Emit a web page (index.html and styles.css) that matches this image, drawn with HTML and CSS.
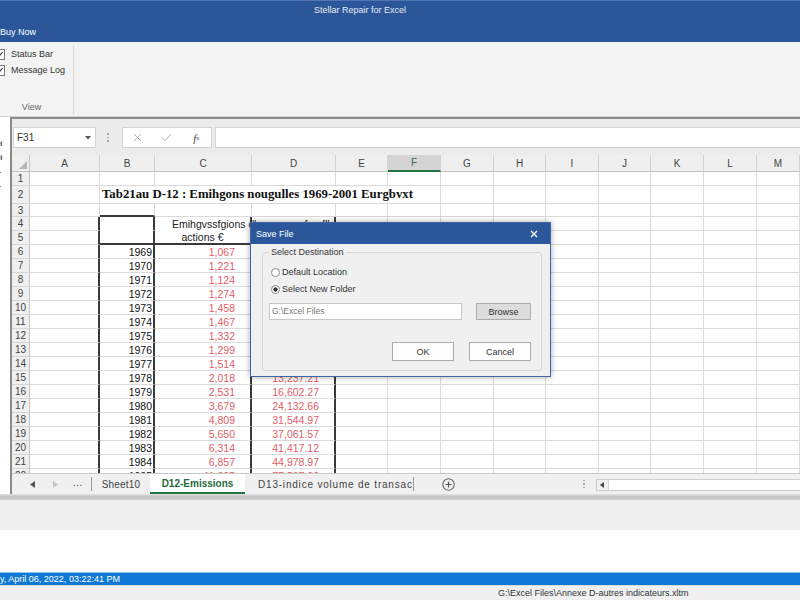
FILE: index.html
```html
<!DOCTYPE html>
<html>
<head>
<meta charset="utf-8">
<title>Stellar Repair for Excel</title>
<link rel="stylesheet" href="styles.css">
</head>
<body>
<div class="app">
  <header class="titlebar">
    <div class="title">Stellar Repair for Excel</div>
    <div class="menu">Buy Now</div>
  </header>

  <section class="ribbon">
    <div class="group">
      <div class="checks">
        <div class="chk"><span class="box"><svg width="9" height="9" viewBox="0 0 9 9"><path d="M1.5 4.5 L3.6 6.8 L7.6 2" fill="none" stroke="#333" stroke-width="1.1"/></svg></span>Status Bar</div>
        <div class="chk"><span class="box"><svg width="9" height="9" viewBox="0 0 9 9"><path d="M1.5 4.5 L3.6 6.8 L7.6 2" fill="none" stroke="#333" stroke-width="1.1"/></svg></span>Message Log</div>
      </div>
      <div class="group-label">View</div>
    </div>
  </section>

  <main class="workarea">
    <aside class="tree">
      <span>ei</span><span>ei</span><span>l-</span><span>l-</span>
    </aside>
    <div class="excel">
      <div class="fbar">
        <div class="namebox"><span>F31</span><svg width="6" height="4" viewBox="0 0 6 4"><path d="M0 0 L6 0 L3 3.5 Z" fill="#555"/></svg></div>
        <div class="vdots"><i></i><i></i><i></i></div>
        <div class="fxbox">
          <span class="fxi"><svg width="9" height="9" viewBox="0 0 9 9"><path d="M1 1 L8 8 M8 1 L1 8" stroke="#b0b0b0" stroke-width="1"/></svg></span>
          <span class="fxi"><svg width="11" height="9" viewBox="0 0 11 9"><path d="M1 4.5 L4 7.8 L10 1" fill="none" stroke="#b0b0b0" stroke-width="1"/></svg></span>
          <span class="fxi fx">f<sub>x</sub></span>
        </div>
        <div class="formula"></div>
      </div>

      <div class="sheet">
        <div class="row hdr">
          <div class="corner"><svg width="8" height="8" viewBox="0 0 8 8"><path d="M8 0 L8 8 L0 8 Z" fill="#b8b8b8"/></svg></div>
          <div>A</div><div>B</div><div>C</div><div>D</div><div>E</div><div class="sel">F</div><div>G</div><div>H</div><div>I</div><div>J</div><div>K</div><div>L</div><div>M</div>
        </div>
        <div class="row"><div class="rh">1</div><div></div><div></div><div></div><div></div><div></div><div></div><div></div><div></div><div></div><div></div><div></div><div></div><div></div></div>
        <div class="row r2"><div class="rh">2</div><div></div><div class="ttl">Tab21au D-12 : Emihgons nougulles 1969-2001 Eurgbvxt</div><div></div><div></div><div></div><div></div><div></div><div></div><div></div></div>
        <div class="row r3"><div class="rh">3</div><div></div><div class="db"></div><div></div><div></div><div></div><div></div><div></div><div></div><div></div><div></div><div></div><div></div><div></div></div>
        <div class="row"><div class="rh">4</div><div class="dr"></div><div class="dr nb"></div><div class="dr nb hc">Emihgvssfgions d'</div><div class="dr nb hd">en fmafll</div><div></div><div></div><div></div><div></div><div></div><div></div><div></div><div></div><div></div></div>
        <div class="row"><div class="rh">5</div><div class="dr"></div><div class="dr db"></div><div class="dr db ctr">actions €</div><div class="dr db"></div><div></div><div></div><div></div><div></div><div></div><div></div><div></div><div></div><div></div></div>
        <div class="row"><div class="rh">6</div><div class="dr"></div><div class="dr yr">1969</div><div class="dr red">1,067</div><div class="dr"></div><div></div><div></div><div></div><div></div><div></div><div></div><div></div><div></div><div></div></div>
        <div class="row"><div class="rh">7</div><div class="dr"></div><div class="dr yr">1970</div><div class="dr red">1,221</div><div class="dr"></div><div></div><div></div><div></div><div></div><div></div><div></div><div></div><div></div><div></div></div>
        <div class="row"><div class="rh">8</div><div class="dr"></div><div class="dr yr">1971</div><div class="dr red">1,124</div><div class="dr"></div><div></div><div></div><div></div><div></div><div></div><div></div><div></div><div></div><div></div></div>
        <div class="row"><div class="rh">9</div><div class="dr"></div><div class="dr yr">1972</div><div class="dr red">1,274</div><div class="dr"></div><div></div><div></div><div></div><div></div><div></div><div></div><div></div><div></div><div></div></div>
        <div class="row"><div class="rh">10</div><div class="dr"></div><div class="dr yr">1973</div><div class="dr red">1,458</div><div class="dr"></div><div></div><div></div><div></div><div></div><div></div><div></div><div></div><div></div><div></div></div>
        <div class="row"><div class="rh">11</div><div class="dr"></div><div class="dr yr">1974</div><div class="dr red">1,467</div><div class="dr"></div><div></div><div></div><div></div><div></div><div></div><div></div><div></div><div></div><div></div></div>
        <div class="row"><div class="rh">12</div><div class="dr"></div><div class="dr yr">1975</div><div class="dr red">1,332</div><div class="dr"></div><div></div><div></div><div></div><div></div><div></div><div></div><div></div><div></div><div></div></div>
        <div class="row"><div class="rh">13</div><div class="dr"></div><div class="dr yr">1976</div><div class="dr red">1,299</div><div class="dr"></div><div></div><div></div><div></div><div></div><div></div><div></div><div></div><div></div><div></div></div>
        <div class="row"><div class="rh">14</div><div class="dr"></div><div class="dr yr">1977</div><div class="dr red">1,514</div><div class="dr"></div><div></div><div></div><div></div><div></div><div></div><div></div><div></div><div></div><div></div></div>
        <div class="row"><div class="rh">15</div><div class="dr"></div><div class="dr yr">1978</div><div class="dr red">2,018</div><div class="dr redd">13,237.21</div><div></div><div></div><div></div><div></div><div></div><div></div><div></div><div></div><div></div></div>
        <div class="row"><div class="rh">16</div><div class="dr"></div><div class="dr yr">1979</div><div class="dr red">2,531</div><div class="dr redd">16,602.27</div><div></div><div></div><div></div><div></div><div></div><div></div><div></div><div></div><div></div></div>
        <div class="row"><div class="rh">17</div><div class="dr"></div><div class="dr yr">1980</div><div class="dr red">3,679</div><div class="dr redd">24,132.66</div><div></div><div></div><div></div><div></div><div></div><div></div><div></div><div></div><div></div></div>
        <div class="row"><div class="rh">18</div><div class="dr"></div><div class="dr yr">1981</div><div class="dr red">4,809</div><div class="dr redd">31,544.97</div><div></div><div></div><div></div><div></div><div></div><div></div><div></div><div></div><div></div></div>
        <div class="row"><div class="rh">19</div><div class="dr"></div><div class="dr yr">1982</div><div class="dr red">5,650</div><div class="dr redd">37,061.57</div><div></div><div></div><div></div><div></div><div></div><div></div><div></div><div></div><div></div></div>
        <div class="row"><div class="rh">20</div><div class="dr"></div><div class="dr yr">1983</div><div class="dr red">6,314</div><div class="dr redd">41,417.12</div><div></div><div></div><div></div><div></div><div></div><div></div><div></div><div></div><div></div></div>
        <div class="row"><div class="rh">21</div><div class="dr"></div><div class="dr yr">1984</div><div class="dr red">6,857</div><div class="dr redd">44,978.97</div><div></div><div></div><div></div><div></div><div></div><div></div><div></div><div></div><div></div></div>
        <div class="row"><div class="rh">22</div><div class="dr"></div><div class="dr yr">1985</div><div class="dr red">11,825</div><div class="dr redd">77,567.00</div><div></div><div></div><div></div><div></div><div></div><div></div><div></div><div></div><div></div></div>
      </div>

      <div class="tabs">
        <div class="nav">
          <span class="nv"><svg width="5" height="7" viewBox="0 0 5 7"><path d="M5 0 L5 7 L0 3.5 Z" fill="#555"/></svg></span>
          <span class="nv nv2"><svg width="5" height="7" viewBox="0 0 5 7"><path d="M0 0 L0 7 L5 3.5 Z" fill="#c4c4c4"/></svg></span>
          <span class="more">...</span>
          <span class="vsep"></span>
        </div>
        <div class="tab t1">Sheet10</div>
        <div class="tab active">D12-Emissions</div>
        <div class="tab t3">D13-indice volume de transactions</div>
        <span class="vsep"></span>
        <span class="add"><svg width="13" height="13" viewBox="0 0 13 13"><circle cx="6.5" cy="6.5" r="5.7" fill="none" stroke="#666" stroke-width="1.1"/><path d="M6.5 3.5 V9.5 M3.5 6.5 H9.5" stroke="#555" stroke-width="1.2"/></svg></span>
        <span class="hdots"><i></i><i></i><i></i></span>
        <div class="hscroll"><span class="sbtn"><svg width="4" height="6" viewBox="0 0 4 6"><path d="M4 0 L4 6 L0 3 Z" fill="#444"/></svg></span></div>
      </div>
    </div>
  </main>

  <div class="band"></div>
  <div class="logarea"></div>
  <div class="logwhite"></div>
  <div class="status">y, April 06, 2022, 03:22:41 PM</div>
  <div class="path">G:\Excel Files\Annexe D-autres indicateurs.xltm</div>

  <div class="dialog">
    <div class="dlg-title"><span>Save File</span><svg width="8" height="8" viewBox="0 0 8 8"><path d="M1 1 L7 7 M7 1 L1 7" stroke="#fff" stroke-width="1.4"/></svg></div>
    <div class="dlg-body">
      <fieldset class="dest">
        <legend>Select Destination</legend>
        <div class="radio r-first"><span class="rb"></span>Default Location</div>
        <div class="radio r-second"><span class="rb on"></span>Select New Folder</div>
        <div class="pathrow">
          <div class="pathinput">G:\Excel Files</div>
          <div class="btn browse">Browse</div>
        </div>
        <div class="btnrow">
          <div class="btn okc">OK</div>
          <div class="btn okc">Cancel</div>
        </div>
      </fieldset>
    </div>
  </div>
</div>
</body>
</html>
```

FILE: styles.css
```css
* { box-sizing: border-box; }
body { margin: 0; font-family: "Liberation Sans", Arial, sans-serif; background: #fff; }
.app { width: 800px; height: 600px; overflow: hidden; position: relative; display: flex; flex-direction: column; background: #fff; }

/* title bar */
.titlebar { height: 42px; flex: none; background: #2b579a; border-top: 1px solid #5077b3; color: #fff; }
.title { height: 21px; padding: 3px 0 0 314px; font-size: 9px; line-height: 12px; color: #e3eaf4; }
.menu { padding-top: 4px; font-size: 9px; line-height: 12px; color: #fff; }

/* ribbon */
.ribbon { height: 75px; flex: none; background: #f3f3f3; border-bottom: 1px solid #d2d2d2; display: flex; }
.group { width: 74px; margin: 3px 0 1px; border-right: 1px solid #dadada; display: flex; flex-direction: column; justify-content: space-between; }
.checks { padding-top: 1px; }
.chk { height: 16px; display: flex; align-items: center; font-size: 9px; color: #333; }
.box { width: 11px; height: 11px; margin-left: -6px; margin-right: 6px; border: 1px solid #7a7a7a; background: #fff; display: flex; align-items: center; justify-content: center; }
.group-label { height: 12px; margin-bottom: 2px; padding-right: 10px; text-align: center; font-size: 9px; line-height: 12px; color: #6a6a6a; }

/* work area */
.workarea { height: 377px; flex: none; display: flex; }
.tree { width: 10px; flex: none; background: #fff; padding-top: 20px; display: flex; flex-direction: column; overflow: hidden; }
.tree span { height: 14px; font-size: 6.5px; line-height: 14px; color: #333; margin-left: -3px; font-weight: bold; }
.excel { flex: 1; min-width: 0; border-left: 2px solid #8a8a8a; border-top: 2px solid #8c8c8c; display: flex; flex-direction: column; overflow: hidden; }

/* formula bar */
.fbar { height: 36px; flex: none; padding-top: 8px; background: #ececec; display: flex; align-items: flex-start; }
.namebox { margin-left: 1px; width: 83px; height: 21px; background: #fff; border: 1px solid #d4d4d4; display: flex; align-items: center; justify-content: space-between; padding: 0 4px 0 3px; font-size: 10px; color: #333; }
.vdots { width: 4px; height: 21px; margin: 0 12px 0 10px; display: flex; flex-direction: column; align-items: center; justify-content: center; gap: 2px; }
.vdots i, .hdots i { display: block; width: 1.5px; height: 1.5px; background: #a8a8a8; }
.fxbox { width: 90px; height: 21px; background: #fff; border: 1px solid #d4d4d4; display: flex; }
.fxi { width: 30px; display: flex; align-items: center; justify-content: center; }
.fx { font-family: "Liberation Serif", "Times New Roman", serif; font-style: italic; font-size: 11px; color: #444; }
.fx sub { font-size: 7px; vertical-align: -1px; }
.formula { margin-left: 3px; flex: 1; height: 21px; background: #fff; border: 1px solid #d4d4d4; border-right: none; }

/* sheet */
.sheet { height: 318px; flex: none; overflow: hidden; background: #fff; }
.row { display: grid; grid-template-columns: 18px 70px 55px 97px 84px 52px 53px 53px 52px 53px 52px 53px 53px 43px; height: 14px; }
.row > div { border-right: 1px solid #dadada; border-bottom: 1px solid #dadada; font-size: 10.5px; white-space: nowrap; display: flex; align-items: center; color: #111; }
.row.r2 { height: 18px; }
.row.r3 { height: 13px; }
.row.hdr { height: 17px; }
.hdr > div { background: #efefef; justify-content: center; font-size: 10px; color: #444; border-right-color: #d2d2d2; border-bottom: 1px solid #c4c4c4; }
.hdr > div.corner { justify-content: flex-end; align-items: flex-end; padding: 0 2px 2px 0; border-right-color: #c4c4c4; }
.hdr > div.sel { background: #d4d4d4; border-bottom: 2px solid #217346; color: #3d6b4e; }
.row > div.rh { background: #efefef; justify-content: center; font-size: 10px; color: #444; border-right: 1px solid #c4c4c4; border-bottom-color: #d6d6d6; }
.row > div.ttl { grid-column: span 5; font-family: "Liberation Serif", "Times New Roman", serif; font-weight: bold; font-size: 12.8px; padding-left: 2px; color: #111; }
.row > div.dr { border-right: 2px solid #3a3a3a; }
.row > div.db { border-bottom: 2px solid #3a3a3a; }
.row > div.nb { border-bottom-color: transparent; }
.row > div.hc { padding-left: 17px; color: #222; }
.row > div.hd { padding-left: 38px; color: #222; }
.row > div.ctr { justify-content: center; color: #222; }
.row > div.yr { justify-content: flex-end; padding-right: 1px; }
.row > div.red { justify-content: flex-end; padding-right: 15px; color: #e25d68; }
.row > div.redd { justify-content: flex-end; padding-right: 15px; color: #e25d68; }

/* sheet tabs */
.tabs { height: 21px; flex: none; background: #f0f0f0; border-top: 1px solid #c8c8c8; display: flex; align-items: stretch; font-size: 10px; color: #444; }
.nav { width: 80px; flex: none; display: flex; align-items: center; padding-left: 17px; }
.nv { width: 6px; display: flex; justify-content: center; }
.nv2 { margin-left: 17px; }
.more { margin-left: 15px; font-size: 10px; color: #444; letter-spacing: 0.5px; line-height: 10px; padding-bottom: 3px; }
.vsep { width: 1px; height: 14px; align-self: center; background: #9a9a9a; flex: none; }
.nav .vsep { margin-left: auto; }
.tab { display: flex; align-items: center; justify-content: center; white-space: nowrap; overflow: hidden; flex: none; color: #444; }
.t1 { width: 58px; letter-spacing: 0.2px; }
.active { width: 95px; background: #fff; border-bottom: 2px solid #217346; color: #1f6b41; font-weight: bold; }
.t3 { width: 168px; justify-content: flex-start; padding-left: 13px; letter-spacing: 0.8px; }
.add { margin-left: 28px; display: flex; align-items: center; flex: none; }
.hdots { margin-left: 128px; display: flex; flex-direction: column; justify-content: center; gap: 2px; flex: none; }
.hscroll { margin-left: 11px; flex: 1; height: 12px; align-self: center; margin-top: 1px; background: #fff; border: 1px solid #cdcdcd; border-right: none; display: flex; }
.sbtn { width: 12px; background: #f0f0f0; border-right: 1px solid #d6d6d6; display: flex; align-items: center; justify-content: center; }

/* bottom */
.band { height: 6px; flex: none; background: linear-gradient(#e6e6e6, #c4c4c4 40%, #cfcfcf); }
.logarea { height: 30px; flex: none; background: #efefef; }
.logwhite { height: 42px; flex: none; background: #fff; }
.status { height: 13px; flex: none; background: #0f78d4; border-top: 1px solid #8cc4ee; color: #fff; font-size: 9px; line-height: 12px; white-space: nowrap; }
.path { height: 15px; flex: none; background: #f0f0f0; border-top: 1px solid #dcdcdc; padding-left: 498px; font-size: 9px; line-height: 14px; color: #333; white-space: nowrap; }

/* dialog */
.dialog { position: absolute; left: 250px; top: 222px; width: 301px; height: 155px; background: #f0f0f0; border: 1px solid #3f67a3; box-shadow: 0 0 6px rgba(0,0,0,0.35); }
.dlg-title { height: 21px; background: #2b579a; color: #fff; font-size: 9px; display: flex; align-items: center; justify-content: space-between; padding: 0 12px 0 5px; }
.dlg-body { padding: 2px 8px 0 11px; }
.dest { margin: 0; width: 280px; height: 125px; padding: 0 6px 3px; border: 1px solid #d6d6d6; border-radius: 3px; }
.dest legend { padding: 0 2px; font-size: 9px; line-height: 12px; color: #333; }
.radio { height: 14px; display: flex; align-items: center; font-size: 9px; color: #333; }
.r-first { margin-top: 7px; }
.r-second { margin-top: 3px; }
.rb { width: 9px; height: 9px; margin: 0 2px 0 2px; border: 1px solid #8a8a8a; border-radius: 50%; background: #fff; flex: none; }
.rb.on { background: radial-gradient(circle, #333 0 1.8px, #fff 2.4px); }
.pathrow { margin-top: 7px; display: flex; }
.pathinput { width: 193px; height: 17px; background: #fff; border: 1px solid #c6c6c6; padding-left: 2px; font-size: 8.5px; line-height: 15px; color: #7a7a7a; }
.btn { height: 17px; border: 1px solid #adadad; display: flex; align-items: center; justify-content: center; font-size: 9px; color: #333; }
.browse { margin-left: 14px; width: 55px; background: #dcdcdc; }
.btnrow { margin-top: 22px; display: flex; justify-content: flex-end; gap: 15px; padding-right: 4px; }
.okc { width: 62px; height: 19px; background: #fdfdfd; }
```
